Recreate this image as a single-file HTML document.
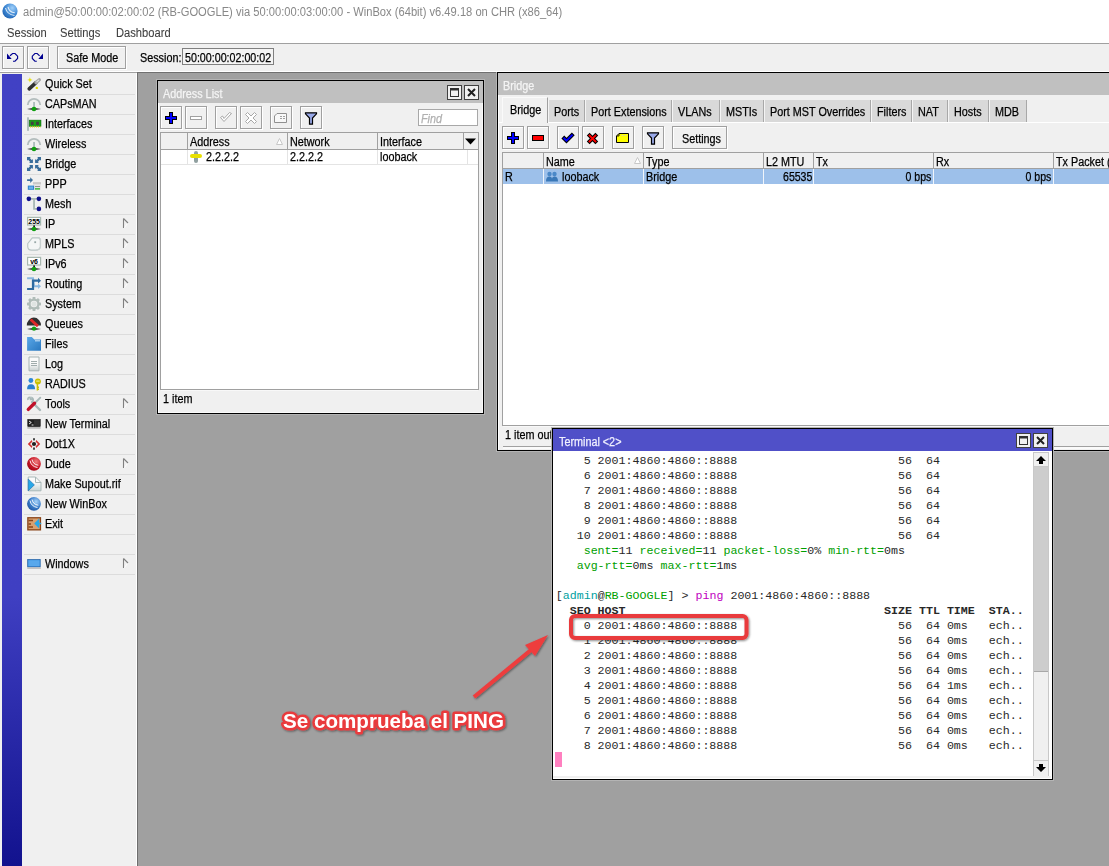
<!DOCTYPE html><html><head><meta charset="utf-8"><style>
*{margin:0;padding:0;box-sizing:border-box}
html,body{width:1109px;height:866px;overflow:hidden;background:#a0a0a0;font-family:"Liberation Sans",sans-serif;font-size:12px;color:#000}
body{position:relative}
.ab{position:absolute}
.t{position:absolute;white-space:pre;line-height:13px;margin-top:1px;font-size:12px;transform:scaleX(.9);transform-origin:0 0;-webkit-text-stroke:.25px currentColor}
.btn{position:absolute;background:#f0f0f0;border:1px solid #a0a0a0;box-shadow:inset 1px 1px 0 #fff,1px 1px 0 #fff}
.mono{font-family:"Liberation Mono",monospace;font-size:11.65px;color:#282828;white-space:pre;position:absolute;line-height:15px;left:555.7px}
svg{position:absolute;overflow:visible}
.g{color:#00a000}.c{color:#00a0a0}.m{color:#c000c0}
</style></head><body>
<div class="ab" style="left:0px;top:0px;width:1109px;height:43px;background:#fff"></div><svg style="left:2px;top:3px" width="16" height="16" viewBox="0 0 16 16"><defs><radialGradient id="gb" cx="0.65" cy="0.3" r="0.85"><stop offset="0" stop-color="#a0d0fa"/><stop offset="0.55" stop-color="#3c86d2"/><stop offset="1" stop-color="#1858a8"/></radialGradient></defs><circle cx="8" cy="8" r="7.6" fill="url(#gb)"/><path d="M3.5 5 Q5 11.5 12.5 12.5" stroke="#fff" stroke-width="1.1" fill="none" opacity=".8"/><path d="M6 3.8 Q7 9 12.8 9.8" stroke="#fff" stroke-width="1.1" fill="none" opacity=".8"/></svg><div class="t" style="left:23px;top:5px;transform:scaleX(0.93);color:#888;-webkit-text-stroke:0">admin@50:00:00:02:00:02 (RB-GOOGLE) via 50:00:00:03:00:00 - WinBox (64bit) v6.49.18 on CHR (x86_64)</div><div class="t" style="left:7px;top:26px;transform:scaleX(0.93);color:#404040;-webkit-text-stroke:.1px #404040">Session</div><div class="t" style="left:60px;top:26px;transform:scaleX(0.93);color:#404040;-webkit-text-stroke:.1px #404040">Settings</div><div class="t" style="left:116px;top:26px;transform:scaleX(0.93);color:#404040;-webkit-text-stroke:.1px #404040">Dashboard</div><div class="ab" style="left:0px;top:43px;width:1109px;height:1px;background:#a0a0a0"></div><div class="ab" style="left:0px;top:44px;width:1109px;height:28px;background:#f0f0f0"></div><div class="ab" style="left:0px;top:71px;width:1109px;height:1px;background:#fff"></div><div class="ab" style="left:0px;top:72px;width:1109px;height:1px;background:#a0a0a0"></div><div class="btn" style="left:2px;top:46px;width:22px;height:23px;"></div><div class="btn" style="left:27px;top:46px;width:22px;height:23px;"></div><svg style="left:0;top:44px" width="52" height="28" viewBox="0 0 52 28"><g fill="none" stroke="#000090" stroke-width="1.15"><path d="M10 11.8 L12.6 9.5 H15 L17.6 12.2 V14.4 L15 17.2 H13"/><path d="M39.6 11.8 L37.2 9.5 H34.9 L32.3 12.2 V14.4 L34.9 17.2 H36.8"/></g><path d="M7 9.6 V15 H11.7 Z M43 9.6 V15 H38.3 Z" fill="#000090"/></svg><div class="btn" style="left:57px;top:46px;width:69px;height:23px;"></div><div class="t" style="left:66px;top:51px;">Safe Mode</div><div class="t" style="left:140px;top:51px;">Session:</div><div class="ab" style="left:182px;top:48px;width:92px;height:17px;background:#f4f4f4;border:1px solid #808080"></div><div class="t" style="left:185px;top:51px;transform:scaleX(0.89);">50:00:00:02:00:02</div><div class="ab" style="left:0px;top:73px;width:137px;height:793px;background:#f0f0f0"></div><div class="ab" style="left:136px;top:73px;width:1px;height:793px;background:#fff"></div><div class="ab" style="left:137px;top:72px;width:1px;height:794px;background:#6e6e6e"></div><div class="ab" style="left:137px;top:72px;width:972px;height:1px;background:#707070"></div><div class="ab" style="left:2px;top:74px;width:20px;height:792px;background:linear-gradient(#4141c4 0%,#3f3fc2 66%,#12128e 100%)"></div><div class="ab" style="left:24px;top:94px;width:111px;height:1px;background:#dcdcdc"></div><div class="t" style="left:45px;top:77px;">Quick Set</div><div class="ab" style="left:24px;top:114px;width:111px;height:1px;background:#dcdcdc"></div><div class="t" style="left:45px;top:97px;">CAPsMAN</div><div class="ab" style="left:24px;top:134px;width:111px;height:1px;background:#dcdcdc"></div><div class="t" style="left:45px;top:117px;">Interfaces</div><div class="ab" style="left:24px;top:154px;width:111px;height:1px;background:#dcdcdc"></div><div class="t" style="left:45px;top:137px;">Wireless</div><div class="ab" style="left:24px;top:174px;width:111px;height:1px;background:#dcdcdc"></div><div class="t" style="left:45px;top:157px;">Bridge</div><div class="ab" style="left:24px;top:194px;width:111px;height:1px;background:#dcdcdc"></div><div class="t" style="left:45px;top:177px;">PPP</div><div class="ab" style="left:24px;top:214px;width:111px;height:1px;background:#dcdcdc"></div><div class="t" style="left:45px;top:197px;">Mesh</div><div class="ab" style="left:24px;top:234px;width:111px;height:1px;background:#dcdcdc"></div><div class="t" style="left:45px;top:217px;">IP</div><svg style="left:123px;top:218px" width="8" height="11" viewBox="0 0 8 11"><path d="M5 5 L1 10" stroke="#fff" stroke-width="1" fill="none"/><path d="M0.5 0.5 L0.5 10 M0.5 0.5 L5 5" stroke="#808080" stroke-width="1.1" fill="none"/></svg><div class="ab" style="left:24px;top:254px;width:111px;height:1px;background:#dcdcdc"></div><div class="t" style="left:45px;top:237px;">MPLS</div><svg style="left:123px;top:238px" width="8" height="11" viewBox="0 0 8 11"><path d="M5 5 L1 10" stroke="#fff" stroke-width="1" fill="none"/><path d="M0.5 0.5 L0.5 10 M0.5 0.5 L5 5" stroke="#808080" stroke-width="1.1" fill="none"/></svg><div class="ab" style="left:24px;top:274px;width:111px;height:1px;background:#dcdcdc"></div><div class="t" style="left:45px;top:257px;">IPv6</div><svg style="left:123px;top:258px" width="8" height="11" viewBox="0 0 8 11"><path d="M5 5 L1 10" stroke="#fff" stroke-width="1" fill="none"/><path d="M0.5 0.5 L0.5 10 M0.5 0.5 L5 5" stroke="#808080" stroke-width="1.1" fill="none"/></svg><div class="ab" style="left:24px;top:294px;width:111px;height:1px;background:#dcdcdc"></div><div class="t" style="left:45px;top:277px;">Routing</div><svg style="left:123px;top:278px" width="8" height="11" viewBox="0 0 8 11"><path d="M5 5 L1 10" stroke="#fff" stroke-width="1" fill="none"/><path d="M0.5 0.5 L0.5 10 M0.5 0.5 L5 5" stroke="#808080" stroke-width="1.1" fill="none"/></svg><div class="ab" style="left:24px;top:314px;width:111px;height:1px;background:#dcdcdc"></div><div class="t" style="left:45px;top:297px;">System</div><svg style="left:123px;top:298px" width="8" height="11" viewBox="0 0 8 11"><path d="M5 5 L1 10" stroke="#fff" stroke-width="1" fill="none"/><path d="M0.5 0.5 L0.5 10 M0.5 0.5 L5 5" stroke="#808080" stroke-width="1.1" fill="none"/></svg><div class="ab" style="left:24px;top:334px;width:111px;height:1px;background:#dcdcdc"></div><div class="t" style="left:45px;top:317px;">Queues</div><div class="ab" style="left:24px;top:354px;width:111px;height:1px;background:#dcdcdc"></div><div class="t" style="left:45px;top:337px;">Files</div><div class="ab" style="left:24px;top:374px;width:111px;height:1px;background:#dcdcdc"></div><div class="t" style="left:45px;top:357px;">Log</div><div class="ab" style="left:24px;top:394px;width:111px;height:1px;background:#dcdcdc"></div><div class="t" style="left:45px;top:377px;">RADIUS</div><div class="ab" style="left:24px;top:414px;width:111px;height:1px;background:#dcdcdc"></div><div class="t" style="left:45px;top:397px;">Tools</div><svg style="left:123px;top:398px" width="8" height="11" viewBox="0 0 8 11"><path d="M5 5 L1 10" stroke="#fff" stroke-width="1" fill="none"/><path d="M0.5 0.5 L0.5 10 M0.5 0.5 L5 5" stroke="#808080" stroke-width="1.1" fill="none"/></svg><div class="ab" style="left:24px;top:434px;width:111px;height:1px;background:#dcdcdc"></div><div class="t" style="left:45px;top:417px;">New Terminal</div><div class="ab" style="left:24px;top:454px;width:111px;height:1px;background:#dcdcdc"></div><div class="t" style="left:45px;top:437px;">Dot1X</div><div class="ab" style="left:24px;top:474px;width:111px;height:1px;background:#dcdcdc"></div><div class="t" style="left:45px;top:457px;">Dude</div><svg style="left:123px;top:458px" width="8" height="11" viewBox="0 0 8 11"><path d="M5 5 L1 10" stroke="#fff" stroke-width="1" fill="none"/><path d="M0.5 0.5 L0.5 10 M0.5 0.5 L5 5" stroke="#808080" stroke-width="1.1" fill="none"/></svg><div class="ab" style="left:24px;top:494px;width:111px;height:1px;background:#dcdcdc"></div><div class="t" style="left:45px;top:477px;">Make Supout.rif</div><div class="ab" style="left:24px;top:514px;width:111px;height:1px;background:#dcdcdc"></div><div class="t" style="left:45px;top:497px;">New WinBox</div><div class="ab" style="left:24px;top:534px;width:111px;height:1px;background:#dcdcdc"></div><div class="t" style="left:45px;top:517px;">Exit</div><div class="ab" style="left:24px;top:554px;width:111px;height:1px;background:#dcdcdc"></div><div class="ab" style="left:24px;top:574px;width:111px;height:1px;background:#dcdcdc"></div><div class="t" style="left:45px;top:557px;">Windows</div><svg style="left:123px;top:558px" width="8" height="11" viewBox="0 0 8 11"><path d="M5 5 L1 10" stroke="#fff" stroke-width="1" fill="none"/><path d="M0.5 0.5 L0.5 10 M0.5 0.5 L5 5" stroke="#808080" stroke-width="1.1" fill="none"/></svg><svg style="left:26px;top:76px" width="16" height="16" viewBox="0 0 16 16"><path d="M3.9 1.2 L4.6 3.2 L6.6 3.9 L4.6 4.6 L3.9 6.6 L3.2 4.6 L1.2 3.9 L3.2 3.2 Z" fill="#e6e000"/><circle cx="10.8" cy="11.9" r="1.2" fill="#e6e000"/><path d="M3.2 12.8 L10 6.6" stroke="#303030" stroke-width="3.6" stroke-linecap="round"/><path d="M10 6.6 L13.3 3.8" stroke="#a8a8a8" stroke-width="3.4" stroke-linecap="round"/><path d="M10.5 6.1 L13 3.9" stroke="#e0e0e0" stroke-width="1.2"/></svg><svg style="left:26px;top:96px" width="16" height="16" viewBox="0 0 16 16"><path d="M1.8 9 A6.2 6.2 0 0 1 14.2 9" stroke="#a8b4b4" stroke-width="1.8" fill="none" opacity=".85"/><rect x="7.2" y="6" width="1.7" height="7" fill="#a8b8b8"/><defs><radialGradient id="shd"><stop offset=".2" stop-color="#101010"/><stop offset="1" stop-color="#101010" stop-opacity="0"/></radialGradient></defs><ellipse cx="8" cy="13" rx="7.5" ry="1.6" fill="url(#shd)"/><circle cx="8" cy="13" r="2.3" fill="#10a010"/></svg><svg style="left:26px;top:116px" width="16" height="16" viewBox="0 0 16 16"><rect x="1.1" y="1.3" width="1.8" height="13.5" fill="#a8b8b8"/><rect x="3.2" y="4.1" width="11.8" height="6.2" fill="#18a018" stroke="#0a5a0a" stroke-width=".5"/><rect x="4.9" y="5.7" width="2.8" height="3.2" fill="#404040"/><rect x="10.1" y="5.7" width="2.8" height="3.2" fill="#404040"/><path d="M4 10.8 H14.5" stroke="#d8d800" stroke-width="1.2" stroke-dasharray="1 1"/></svg><svg style="left:26px;top:136px" width="16" height="16" viewBox="0 0 16 16"><path d="M1.8 9 A6.2 6.2 0 0 1 14.2 9" stroke="#a8b4b4" stroke-width="1.8" fill="none" opacity=".85"/><rect x="7.2" y="6" width="1.7" height="7" fill="#a8b8b8"/><defs><radialGradient id="shd"><stop offset=".2" stop-color="#101010"/><stop offset="1" stop-color="#101010" stop-opacity="0"/></radialGradient></defs><ellipse cx="8" cy="13" rx="7.5" ry="1.6" fill="url(#shd)"/><circle cx="8" cy="13" r="2.3" fill="#10a010"/></svg><svg style="left:26px;top:156px" width="16" height="16" viewBox="0 0 16 16"><g><path d="M1 1 H4.9 L1 4.8 Z M6.9 6.9 H3.1 L6.9 3.1 Z" fill="#3a6e9c"/><path d="M2.2 2.2 L5.8 5.8" stroke="#3a6e9c" stroke-width="2.4"/></g><g transform="translate(16 0) scale(-1 1)"><path d="M1 1 H4.9 L1 4.8 Z M6.9 6.9 H3.1 L6.9 3.1 Z" fill="#3a6e9c"/><path d="M2.2 2.2 L5.8 5.8" stroke="#3a6e9c" stroke-width="2.4"/></g><g transform="translate(0 16) scale(1 -1)"><path d="M1 1 H4.9 L1 4.8 Z M6.9 6.9 H3.1 L6.9 3.1 Z" fill="#3a6e9c"/><path d="M2.2 2.2 L5.8 5.8" stroke="#3a6e9c" stroke-width="2.4"/></g><g transform="translate(16 16) scale(-1 -1)"><path d="M1 1 H4.9 L1 4.8 Z M6.9 6.9 H3.1 L6.9 3.1 Z" fill="#3a6e9c"/><path d="M2.2 2.2 L5.8 5.8" stroke="#3a6e9c" stroke-width="2.4"/></g></svg><svg style="left:26px;top:176px" width="16" height="16" viewBox="0 0 16 16"><path d="M1.1 3.3 H4.2 V1.3 L7 4.1 L4.2 6.9 V4.9 H1.1 Z" fill="#3a6e9c"/><rect x="7" y="6.2" width="8" height="7.9" fill="#e4e4e4"/><rect x="7" y="6.2" width="8" height="2" fill="#c8c8c8"/><rect x="9" y="10" width="5" height="1" fill="#909090"/><rect x="9" y="12.3" width="5" height="1.2" fill="#10b010"/><rect x="1.8" y="9.6" width="6.3" height="4.2" fill="#2a80cc"/><rect x="2.8" y="10.5" width="4.3" height="2.4" fill="#6ab0ea"/></svg><svg style="left:26px;top:196px" width="16" height="16" viewBox="0 0 16 16"><path d="M2.85 2.85 H12.9 M8.05 2.85 V12.9 H12.9" stroke="#a8b8b4" stroke-width="1.8" fill="none"/><circle cx="2.85" cy="2.85" r="2.3" fill="#10108a"/><circle cx="12.9" cy="2.85" r="2.3" fill="#10108a"/><circle cx="12.9" cy="12.9" r="2.3" fill="#10108a"/></svg><svg style="left:26px;top:216px" width="16" height="16" viewBox="0 0 16 16"><rect x="1.6" y="1.4" width="13" height="7.6" fill="#fff" stroke="#a8b8b0" stroke-width="1.2"/><text x="8.1" y="7.9" font-family="Liberation Sans" font-weight="bold" font-size="7" text-anchor="middle" fill="#000">255</text><rect x="7.3" y="9.4" width="1.6" height="2" fill="#000"/><defs><radialGradient id="shd"><stop offset=".2" stop-color="#101010"/><stop offset="1" stop-color="#101010" stop-opacity="0"/></radialGradient></defs><ellipse cx="8" cy="13" rx="7.5" ry="1.6" fill="url(#shd)"/><circle cx="8" cy="13" r="2.3" fill="#10a010"/></svg><svg style="left:26px;top:236px" width="16" height="16" viewBox="0 0 16 16"><path d="M1.2 7.5 L6 1.3 H13.5 L15 3 V10.5 Q14.5 14.7 9.5 14.7 H5.5 Q1.2 14.7 1.2 10.5 Z" fill="#b8c4c4"/><path d="M2.3 7.8 L6.5 2.4 H12.5 Q13.8 2.6 13.8 4.5 V10.2 Q13.6 13.6 9.3 13.6 H5.5 Q2.3 13.6 2.3 10.3 Z" fill="#f4f6f6"/><path d="M13 2.4 L14.5 3.6 V10.5 Q14 14 10 14.2" stroke="#c8d0d0" stroke-width="1.2" fill="none"/><rect x="8.3" y="5.3" width="1.8" height="1.8" fill="#98a8a8"/></svg><svg style="left:26px;top:256px" width="16" height="16" viewBox="0 0 16 16"><rect x="1.6" y="1.4" width="13" height="7.6" fill="#fff" stroke="#a8b8b0" stroke-width="1.2"/><text x="8.1" y="7.9" font-family="Liberation Sans" font-weight="bold" font-size="7" text-anchor="middle" fill="#000">v6</text><rect x="7.3" y="9.4" width="1.6" height="2" fill="#000"/><defs><radialGradient id="shd"><stop offset=".2" stop-color="#101010"/><stop offset="1" stop-color="#101010" stop-opacity="0"/></radialGradient></defs><ellipse cx="8" cy="13" rx="7.5" ry="1.6" fill="url(#shd)"/><circle cx="8" cy="13" r="2.3" fill="#10a010"/></svg><svg style="left:26px;top:276px" width="16" height="16" viewBox="0 0 16 16"><path d="M1.1 2.3 H7 L8 10.2 H12.5" stroke="#8ab8e0" stroke-width="2" fill="none"/><path d="M12 7.5 L15 10.2 L12 13 Z" fill="#8ab8e0"/><path d="M1.1 13 H7 V4.7 H12.5" stroke="#2e6aa0" stroke-width="2.2" fill="none"/><path d="M12 1.8 L15 4.7 L12 7.6 Z" fill="#2e6aa0"/></svg><svg style="left:26px;top:296px" width="16" height="16" viewBox="0 0 16 16"><g fill="#b0bcb8"><circle cx="8" cy="8" r="5.6"/><rect x="6.6" y="1" width="2.8" height="14"/><rect x="1" y="6.6" width="14" height="2.8"/><rect x="6.6" y="1" width="2.8" height="14" transform="rotate(45 8 8)"/><rect x="6.6" y="1" width="2.8" height="14" transform="rotate(-45 8 8)"/></g><circle cx="8" cy="8" r="3.3" fill="#f0f0f0"/><circle cx="8" cy="8" r="2.5" fill="#dfe4e2"/></svg><svg style="left:26px;top:316px" width="16" height="16" viewBox="0 0 16 16"><path d="M0.8 9.4 A7.1 7.8 0 0 1 15 9.4 Z" fill="#303030"/><path d="M4.6 3.5 L11.9 10.1" stroke="#e02828" stroke-width="2.8"/><defs><radialGradient id="shd"><stop offset=".2" stop-color="#101010"/><stop offset="1" stop-color="#101010" stop-opacity="0"/></radialGradient></defs><ellipse cx="8" cy="13" rx="7.5" ry="1.6" fill="url(#shd)"/><circle cx="8" cy="12.6" r="2.2" fill="#10a010"/></svg><svg style="left:26px;top:336px" width="16" height="16" viewBox="0 0 16 16"><defs><linearGradient id="fg" x1="0" y1="0" x2="1" y2="1"><stop offset="0" stop-color="#5aa8e8"/><stop offset="1" stop-color="#2a78c0"/></linearGradient></defs><path d="M1.1 0.9 H5.8 L8.3 3.5 H15 V14.7 H1.1 Z" fill="url(#fg)"/><rect x="9" y="4.4" width="5" height=".9" fill="#e8f4ff"/></svg><svg style="left:26px;top:356px" width="16" height="16" viewBox="0 0 16 16"><defs><linearGradient id="lg" x1="0" y1="0" x2="0" y2="1"><stop offset=".5" stop-color="#fafafa"/><stop offset="1" stop-color="#c8d0d0"/></linearGradient></defs><path d="M3 1 H13 V14.8 H3 Z" fill="url(#lg)" stroke="#a8b4b4" stroke-width="1"/><path d="M5 5.5 H11 M5 7.5 H11 M5 9.5 H11" stroke="#a0acac" stroke-width="1"/></svg><svg style="left:26px;top:376px" width="16" height="16" viewBox="0 0 16 16"><circle cx="4.9" cy="4.5" r="2.4" fill="#2a88d8"/><path d="M1.1 13.2 Q1 8.3 5 8.3 Q9.1 8.3 9.1 13.2 Z" fill="#2a80d0"/><circle cx="11.9" cy="5.4" r="3" fill="#c8c000"/><rect x="10.2" y="4.6" width="3.4" height="1" fill="#f0f0a0"/><path d="M11.4 8 V14.5 M11.4 11.2 H13 M11.4 13.3 H13" stroke="#c8c000" stroke-width="1.5"/></svg><svg style="left:26px;top:396px" width="16" height="16" viewBox="0 0 16 16"><path d="M6 6 L14 14" stroke="#a8b8b8" stroke-width="2.4" stroke-linecap="round"/><path d="M2 4 Q1.5 1.5 4 1.3 L4.5 3.5 L6 3.5 L6 1.8 Q8.2 3 6.5 6" stroke="#a8b8b8" stroke-width="1.6" fill="none"/><path d="M8 8 L14.3 1.6" stroke="#a8b8b8" stroke-width="1.8" stroke-linecap="round"/><path d="M2.3 13.4 L8.5 7.2" stroke="#c0102a" stroke-width="3.4" stroke-linecap="round"/></svg><svg style="left:26px;top:416px" width="16" height="16" viewBox="0 0 16 16"><rect x="1.8" y="3.6" width="12.4" height="6.8" fill="#202020" stroke="#000" stroke-width=".6"/><rect x="8" y="4.2" width="5.8" height="5.6" fill="#404040" opacity=".6"/><path d="M3 5 L5.3 6.5 L3 8" stroke="#fff" stroke-width=".9" fill="none"/><path d="M5.6 9 H7.5" stroke="#fff" stroke-width=".9"/><rect x="1.3" y="11.2" width="13.4" height="1.4" fill="#b0b0b0"/></svg><svg style="left:26px;top:436px" width="16" height="16" viewBox="0 0 16 16"><path d="M5.8 4 L1.8 8 L5.8 12 L6.3 10.3 L4 8 L6.3 5.7 Z" fill="#d03030"/><path d="M10.2 4 L14.2 8 L10.2 12 L9.7 10.3 L12 8 L9.7 5.7 Z" fill="#d03030"/><circle cx="8" cy="8" r="2.1" fill="#202020"/><rect x="7.2" y="2.2" width="1.6" height="2.2" fill="#202020"/><rect x="7.2" y="11.5" width="1.6" height="2.2" fill="#202020"/></svg><svg style="left:26px;top:456px" width="16" height="16" viewBox="0 0 16 16"><defs><radialGradient id="of08080" cx=".65" cy=".35" r=".8"><stop offset="0" stop-color="#f08080"/><stop offset=".55" stop-color="#c81828"/><stop offset="1" stop-color="#900010"/></radialGradient></defs><circle cx="8" cy="7.8" r="6.9" fill="url(#of08080)"/><path d="M4 4.5 Q5 10.5 11.5 11.5" stroke="#fff" stroke-width="1" fill="none" opacity=".9"/><path d="M6 3.5 Q7 8.5 12.3 9.2" stroke="#fff" stroke-width="1" fill="none" opacity=".9"/></svg><svg style="left:26px;top:476px" width="16" height="16" viewBox="0 0 16 16"><defs><linearGradient id="sg" x1="0" y1="0" x2="0" y2="1"><stop offset=".4" stop-color="#fafafa"/><stop offset="1" stop-color="#c8d4d4"/></linearGradient></defs><path d="M2.2 1 H9.5 L15 6.5 V14.8 H2.2 Z" fill="url(#sg)" stroke="#a8b8b8" stroke-width="1"/><path d="M9.5 1 V6.5 H15" stroke="#a8b8b8" stroke-width="1" fill="none"/><path d="M2.2 3 L8.4 8.9 L2.2 14.8 Z" fill="#28a8e8" stroke="#1a68a8" stroke-width=".6"/></svg><svg style="left:26px;top:496px" width="16" height="16" viewBox="0 0 16 16"><defs><radialGradient id="oa8d4fa" cx=".65" cy=".35" r=".8"><stop offset="0" stop-color="#a8d4fa"/><stop offset=".55" stop-color="#3a7cc8"/><stop offset="1" stop-color="#1a4a98"/></radialGradient></defs><circle cx="8" cy="7.8" r="6.9" fill="url(#oa8d4fa)"/><path d="M4 4.5 Q5 10.5 11.5 11.5" stroke="#fff" stroke-width="1" fill="none" opacity=".9"/><path d="M6 3.5 Q7 8.5 12.3 9.2" stroke="#fff" stroke-width="1" fill="none" opacity=".9"/></svg><svg style="left:26px;top:516px" width="16" height="16" viewBox="0 0 16 16"><rect x="1.2" y="1.1" width="13.9" height="13.4" fill="#8a4418"/><rect x="2.5" y="2.4" width="11.3" height="10.8" fill="#d8a070"/><path d="M2.5 4.5 H7 M2.5 8 H5 M2.5 11 H7" stroke="#8a4418" stroke-width="1.3"/><path d="M8.2 7.5 L13.2 2.5 V12.6 Z" fill="#28a8e8"/><rect x="12" y="6.8" width="3.2" height="1.4" fill="#28a8e8"/></svg><svg style="left:26px;top:556px" width="16" height="16" viewBox="0 0 16 16"><rect x="1.7" y="3.6" width="12.5" height="7.3" fill="#3a90e0" stroke="#1a5aa0" stroke-width=".7"/><rect x="2.5" y="4.3" width="11" height="5.8" fill="#58a8ec"/><rect x="1.2" y="11.4" width="13.6" height="1.4" fill="#b8b8b8"/></svg><div class="ab" style="left:156px;top:79px;width:329px;height:336px;border:1px solid #b4b4b4"></div><div class="ab" style="left:157px;top:80px;width:327px;height:334px;background:#f0f0f0;border:1px solid #000;box-shadow:inset 1px 1px 0 #fff,inset -1px -1px 0 #fafafa"></div><div class="ab" style="left:158px;top:81px;width:325px;height:22px;background:#c0c0c0"></div><div class="t" style="left:163px;top:87px;color:#f4f4f4">Address List</div><div class="ab" style="left:447px;top:85px;width:15px;height:15px;background:#f0f0f0;border:1px solid #404040"></div><div class="ab" style="left:464px;top:85px;width:15px;height:15px;background:#f0f0f0;border:1px solid #404040"></div><svg style="left:450px;top:88px" width="9" height="9"><rect x="0.5" y="0.5" width="8" height="8" fill="none" stroke="#303030" stroke-width="1"/><rect x="0.5" y="0.5" width="8" height="2" fill="#303030"/></svg><svg style="left:467px;top:88px" width="9" height="9"><path d="M1 1 L8 8 M8 1 L1 8" stroke="#202020" stroke-width="2"/></svg><div class="btn" style="left:160px;top:106px;width:22px;height:23px;"></div><div class="btn" style="left:185px;top:106px;width:22px;height:23px;"></div><div class="btn" style="left:215px;top:106px;width:22px;height:23px;"></div><div class="btn" style="left:240px;top:106px;width:22px;height:23px;"></div><div class="btn" style="left:270px;top:106px;width:22px;height:23px;"></div><div class="btn" style="left:300px;top:106px;width:22px;height:23px;"></div><svg style="left:165px;top:112px" width="12" height="12" viewBox="0 0 12 12" shape-rendering="crispEdges"><path d="M4 0 H8 V4 H12 V8 H8 V12 H4 V8 H0 V4 H4 Z" fill="#000"/><path d="M5 1 H7 V5 H11 V7 H7 V11 H5 V7 H1 V5 H5 Z" fill="#0000ff"/></svg><svg style="left:190px;top:116px" width="12" height="4"><rect x="0.5" y="0.5" width="11" height="3" fill="#fff" stroke="#a0a0a0"/></svg><svg style="left:220px;top:112px" width="12" height="11" viewBox="0 0 12 11"><path d="M0.5 5.5 L4 9.5 L11.5 1.5 L9.5 0.5 L4 6.5 L2.5 4 Z" fill="#fff" stroke="#a8a8a8"/></svg><svg style="left:245px;top:112px" width="12" height="12" viewBox="0 0 12 12"><path d="M0.5 2.5 L2.5 0.5 L6 4 L9.5 0.5 L11.5 2.5 L8 6 L11.5 9.5 L9.5 11.5 L6 8 L2.5 11.5 L0.5 9.5 L4 6 Z" fill="#fff" stroke="#a8a8a8"/></svg><svg style="left:274px;top:113px" width="13" height="10" viewBox="0 0 13 10"><path d="M0.5 3 L3 0.5 H12.5 V9.5 H0.5 Z" fill="#f8f8f8" stroke="#909090"/><path d="M6 3.5 H8 M9 3.5 H11 M6 5.5 H8 M9 5.5 H11" stroke="#a0a0a0"/></svg><svg style="left:305px;top:112px" width="12" height="13" viewBox="0 0 12 13"><path d="M0.5 0.8 H11.5 V1.8 L7.5 6 V12.2 H4.5 V6 L0.5 1.8 Z" fill="#98a8e8" stroke="#000" stroke-width="1.2"/></svg><div class="ab" style="left:418px;top:109px;width:60px;height:17px;background:#fff;border:1px solid #a8a8a8"></div><div class="t" style="left:421px;top:112px;color:#b0b0b0;font-style:italic">Find</div><div class="ab" style="left:160px;top:132px;width:319px;height:258px;background:#fff;border:1px solid #a0a0a0"></div><div class="ab" style="left:161px;top:133px;width:317px;height:17px;background:#f0f0f0;border-bottom:1px solid #a0a0a0"></div><div class="ab" style="left:187px;top:133px;width:1px;height:17px;background:#a0a0a0"></div><div class="ab" style="left:287px;top:133px;width:1px;height:17px;background:#a0a0a0"></div><div class="ab" style="left:377px;top:133px;width:1px;height:17px;background:#a0a0a0"></div><div class="ab" style="left:463px;top:133px;width:1px;height:17px;background:#a0a0a0"></div><div class="ab" style="left:187px;top:150px;width:1px;height:14px;background:#e4e4e4"></div><div class="ab" style="left:287px;top:150px;width:1px;height:14px;background:#e4e4e4"></div><div class="ab" style="left:377px;top:150px;width:1px;height:14px;background:#e4e4e4"></div><div class="ab" style="left:467px;top:150px;width:1px;height:14px;background:#e4e4e4"></div><div class="ab" style="left:161px;top:164px;width:317px;height:1px;background:#e4e4e4"></div><div class="t" style="left:190px;top:135px;">Address</div><div class="t" style="left:290px;top:135px;">Network</div><div class="t" style="left:380px;top:135px;">Interface</div><svg style="left:276px;top:138px" width="7" height="7"><path d="M3.5 0.5 L6.5 6.5 H0.5 Z" fill="#fff" stroke="#c8c8c8"/></svg><svg style="left:465px;top:138px" width="12" height="8"><path d="M0 0.5 H11 L5.5 6.5 Z" fill="#000"/></svg><svg style="left:190px;top:151px" width="12" height="12"><rect x="4" y="0" width="4" height="12" rx="2" fill="#90a0a0"/><rect x="0" y="3" width="12" height="4" rx="2" fill="#e8e000"/></svg><div class="t" style="left:206px;top:150px;">2.2.2.2</div><div class="t" style="left:290px;top:150px;">2.2.2.2</div><div class="t" style="left:380px;top:150px;">looback</div><div class="ab" style="left:161px;top:390px;width:317px;height:1px;background:#f8f8f8"></div><div class="t" style="left:163px;top:392px;">1 item</div><div class="ab" style="left:496px;top:71px;width:620px;height:381px;border:1px solid #b4b4b4"></div><div class="ab" style="left:496px;top:71px;width:613px;height:1px;background:#fff"></div><div class="ab" style="left:497px;top:72px;width:620px;height:379px;background:#f0f0f0;border:1px solid #000;box-shadow:inset 1px 1px 0 #fff"></div><div class="ab" style="left:498px;top:73px;width:620px;height:22px;background:#c0c0c0"></div><div class="t" style="left:503px;top:79px;color:#f4f4f4">Bridge</div><div class="ab" style="left:498px;top:122px;width:620px;height:1px;background:#fff"></div><div class="ab" style="left:502px;top:97px;width:46px;height:26px;background:#f0f0f0;border-top:1px solid #fafafa;border-left:1px solid #fafafa;border-right:1px solid #a0a0a0"></div><div class="t" style="left:510px;top:103px;">Bridge</div><div class="ab" style="left:548px;top:100px;width:37px;height:22px;background:#d9d9d9;border-right:1px solid #a8a8a8;box-shadow:inset 1px 0 0 #f4f4f4"></div><div class="t" style="left:554px;top:105px;">Ports</div><div class="ab" style="left:585px;top:100px;width:87px;height:22px;background:#d9d9d9;border-right:1px solid #a8a8a8;box-shadow:inset 1px 0 0 #f4f4f4"></div><div class="t" style="left:591px;top:105px;">Port Extensions</div><div class="ab" style="left:672px;top:100px;width:48px;height:22px;background:#d9d9d9;border-right:1px solid #a8a8a8;box-shadow:inset 1px 0 0 #f4f4f4"></div><div class="t" style="left:678px;top:105px;">VLANs</div><div class="ab" style="left:720px;top:100px;width:44px;height:22px;background:#d9d9d9;border-right:1px solid #a8a8a8;box-shadow:inset 1px 0 0 #f4f4f4"></div><div class="t" style="left:726px;top:105px;">MSTIs</div><div class="ab" style="left:764px;top:100px;width:107px;height:22px;background:#d9d9d9;border-right:1px solid #a8a8a8;box-shadow:inset 1px 0 0 #f4f4f4"></div><div class="t" style="left:770px;top:105px;">Port MST Overrides</div><div class="ab" style="left:871px;top:100px;width:41px;height:22px;background:#d9d9d9;border-right:1px solid #a8a8a8;box-shadow:inset 1px 0 0 #f4f4f4"></div><div class="t" style="left:877px;top:105px;">Filters</div><div class="ab" style="left:912px;top:100px;width:36px;height:22px;background:#d9d9d9;border-right:1px solid #a8a8a8;box-shadow:inset 1px 0 0 #f4f4f4"></div><div class="t" style="left:918px;top:105px;">NAT</div><div class="ab" style="left:948px;top:100px;width:41px;height:22px;background:#d9d9d9;border-right:1px solid #a8a8a8;box-shadow:inset 1px 0 0 #f4f4f4"></div><div class="t" style="left:954px;top:105px;">Hosts</div><div class="ab" style="left:989px;top:100px;width:38px;height:22px;background:#d9d9d9;border-right:1px solid #a8a8a8;box-shadow:inset 1px 0 0 #f4f4f4"></div><div class="t" style="left:995px;top:105px;">MDB</div><div class="btn" style="left:502px;top:126px;width:22px;height:23px;"></div><div class="btn" style="left:527px;top:126px;width:22px;height:23px;"></div><div class="btn" style="left:557px;top:126px;width:22px;height:23px;"></div><div class="btn" style="left:582px;top:126px;width:22px;height:23px;"></div><div class="btn" style="left:612px;top:126px;width:22px;height:23px;"></div><div class="btn" style="left:642px;top:126px;width:22px;height:23px;"></div><div class="btn" style="left:672px;top:126px;width:55px;height:23px;"></div><div class="t" style="left:682px;top:132px;">Settings</div><svg style="left:507px;top:132px" width="12" height="12" viewBox="0 0 12 12" shape-rendering="crispEdges"><path d="M4 0 H8 V4 H12 V8 H8 V12 H4 V8 H0 V4 H4 Z" fill="#000"/><path d="M5 1 H7 V5 H11 V7 H7 V11 H5 V7 H1 V5 H5 Z" fill="#0000ff"/></svg><svg style="left:532px;top:135px" width="12" height="6"><rect x="0.5" y="0.5" width="11" height="5" fill="#ff0000" stroke="#000" stroke-width="1"/></svg><svg style="left:560px;top:130px" width="16" height="15" viewBox="0 0 16 15"><path d="M2.8 7 L6.5 10.7 L13.3 3.9" stroke="#000" stroke-width="4" fill="none" stroke-linejoin="miter"/><path d="M3.5 7.7 L6.5 10.7 L12.6 4.6" stroke="#0000ff" stroke-width="2" fill="none" stroke-linejoin="miter"/></svg><svg style="left:586px;top:132px" width="13" height="13" viewBox="0 0 13 13"><path d="M2.2 2.2 L10.8 10.8 M10.8 2.2 L2.2 10.8" stroke="#000" stroke-width="4"/><path d="M2.9 2.9 L10.1 10.1 M10.1 2.9 L2.9 10.1" stroke="#ff0000" stroke-width="2"/></svg><svg style="left:616px;top:133px" width="13" height="10" viewBox="0 0 13 10"><path d="M0.5 3 L3 0.5 H12.5 V9.5 H0.5 Z" fill="#ffff00" stroke="#000" stroke-width="1"/><path d="M0.8 3 H3 V0.8" stroke="#000" stroke-width=".8" fill="none"/><path d="M5.5 2.5 H7.5 M8.5 2.5 H10.5" stroke="#d8d8a0" stroke-width="1"/></svg><svg style="left:647px;top:132px" width="12" height="13" viewBox="0 0 12 13"><path d="M0.5 0.8 H11.5 V1.8 L7.5 6 V12.2 H4.5 V6 L0.5 1.8 Z" fill="#98a8e8" stroke="#000" stroke-width="1.2"/></svg><div class="ab" style="left:502px;top:152px;width:620px;height:274px;background:#fff;border:1px solid #a0a0a0"></div><div class="ab" style="left:503px;top:153px;width:620px;height:16px;background:#f0f0f0;border-bottom:1px solid #a0a0a0"></div><div class="ab" style="left:543px;top:153px;width:1px;height:16px;background:#a0a0a0"></div><div class="ab" style="left:643px;top:153px;width:1px;height:16px;background:#a0a0a0"></div><div class="ab" style="left:763px;top:153px;width:1px;height:16px;background:#a0a0a0"></div><div class="ab" style="left:813px;top:153px;width:1px;height:16px;background:#a0a0a0"></div><div class="ab" style="left:933px;top:153px;width:1px;height:16px;background:#a0a0a0"></div><div class="ab" style="left:1053px;top:153px;width:1px;height:16px;background:#a0a0a0"></div><div class="ab" style="left:503px;top:169px;width:620px;height:15px;background:#9dc0ea"></div><div class="ab" style="left:543px;top:169px;width:1px;height:15px;background:#f0f4fa"></div><div class="ab" style="left:643px;top:169px;width:1px;height:15px;background:#f0f4fa"></div><div class="ab" style="left:763px;top:169px;width:1px;height:15px;background:#f0f4fa"></div><div class="ab" style="left:813px;top:169px;width:1px;height:15px;background:#f0f4fa"></div><div class="ab" style="left:933px;top:169px;width:1px;height:15px;background:#f0f4fa"></div><div class="ab" style="left:1053px;top:169px;width:1px;height:15px;background:#f0f4fa"></div><div class="t" style="left:546px;top:155px;">Name</div><div class="t" style="left:646px;top:155px;">Type</div><div class="t" style="left:766px;top:155px;">L2 MTU</div><div class="t" style="left:816px;top:155px;">Tx</div><div class="t" style="left:936px;top:155px;">Rx</div><div class="t" style="left:1056px;top:155px;">Tx Packet (p/s)</div><svg style="left:634px;top:157px" width="7" height="7"><path d="M3.5 0.5 L6.5 6.5 H0.5 Z" fill="#fff" stroke="#c8c8c8"/></svg><div class="t" style="left:505px;top:170px;">R</div><svg style="left:546px;top:171px" width="12" height="11" viewBox="0 0 12 11"><circle cx="3.5" cy="3" r="2.2" fill="#4a88c8"/><circle cx="8.5" cy="3" r="2.2" fill="#4a88c8"/><path d="M0 10.5 Q0 5.5 3.5 5.5 Q6 5.5 6 8 Q6 5.5 8.5 5.5 Q12 5.5 12 10.5 Z" fill="#3a78b8"/></svg><div class="t" style="left:562px;top:170px;">looback</div><div class="t" style="left:646px;top:170px;">Bridge</div><div class="t" style="right:297px;top:170px;transform:scaleX(0.88);transform-origin:100% 0;">65535</div><div class="t" style="right:178px;top:170px;transform:scaleX(0.88);transform-origin:100% 0;">0 bps</div><div class="t" style="right:58px;top:170px;transform:scaleX(0.88);transform-origin:100% 0;">0 bps</div><div class="ab" style="left:503px;top:426px;width:620px;height:1px;background:#f8f8f8"></div><div class="t" style="left:505px;top:428px;">1 item out of 1</div><div class="ab" style="left:503px;top:446px;width:620px;height:1px;background:#a0a0a0"></div><div class="ab" style="left:503px;top:447px;width:620px;height:2px;background:#fafafa"></div><div class="ab" style="left:551px;top:427px;width:503px;height:354px;border:1px solid #b4b4b4"></div><div class="ab" style="left:552px;top:428px;width:501px;height:352px;background:#fff;border:1px solid #000"></div><div class="ab" style="left:553px;top:429px;width:499px;height:22px;background:#5050c8"></div><div class="t" style="left:559px;top:435px;color:#f0f0ff">Terminal &lt;2&gt;</div><div class="ab" style="left:1016px;top:433px;width:15px;height:15px;background:#f0f0f0;border:1px solid #404040"></div><div class="ab" style="left:1033px;top:433px;width:15px;height:15px;background:#f0f0f0;border:1px solid #404040"></div><svg style="left:1019px;top:436px" width="9" height="9"><rect x="0.5" y="0.5" width="8" height="8" fill="none" stroke="#303030" stroke-width="1"/><rect x="0.5" y="0.5" width="8" height="2" fill="#303030"/></svg><svg style="left:1036px;top:436px" width="9" height="9"><path d="M1 1 L8 8 M8 1 L1 8" stroke="#202020" stroke-width="2"/></svg><div class="ab" style="left:1033px;top:452px;width:16px;height:325px;background:#f0f0f0;border:1px solid #c8c8c8"></div><div class="ab" style="left:1034px;top:453px;width:14px;height:14px;background:#f0f0f0;box-shadow:inset 0 -1px 0 #c8c8c8"></div><div class="ab" style="left:1034px;top:467px;width:14px;height:205px;background:#cdcdcd;box-shadow:inset 0 -1px 0 #a8a8a8"></div><div class="ab" style="left:1034px;top:760px;width:14px;height:16px;background:#f0f0f0;box-shadow:inset 0 1px 0 #c8c8c8"></div><svg style="left:1036px;top:456px" width="10" height="8"><path d="M5 0 L10 5 H7 V8 H3 V5 H0 Z" fill="#000"/></svg><svg style="left:1036px;top:764px" width="10" height="8"><path d="M5 8 L10 3 H7 V0 H3 V3 H0 Z" fill="#000"/></svg><div class="ab" style="left:553px;top:776px;width:498px;height:2px;background:#f0f0f0"></div><div class="mono" style="top:453px">    5 2001:4860:4860::8888                       56  64</div><div class="mono" style="top:468px">    6 2001:4860:4860::8888                       56  64</div><div class="mono" style="top:483px">    7 2001:4860:4860::8888                       56  64</div><div class="mono" style="top:498px">    8 2001:4860:4860::8888                       56  64</div><div class="mono" style="top:513px">    9 2001:4860:4860::8888                       56  64</div><div class="mono" style="top:528px">   10 2001:4860:4860::8888                       56  64</div><div class="mono" style="top:543px">    <span class="g">sent=</span>11 <span class="g">received=</span>11 <span class="g">packet-loss=</span>0% <span class="g">min-rtt=</span>0ms</div><div class="mono" style="top:558px">   <span class="g">avg-rtt=</span>0ms <span class="g">max-rtt=</span>1ms</div><div class="mono" style="top:573px"></div><div class="mono" style="top:588px">[<span class="c">admin</span>@<span class="g">RB-GOOGLE</span>] &gt; <span class="m">ping</span> 2001:4860:4860::8888</div><div class="mono" style="top:603px"><b>  SEQ HOST                                     SIZE TTL TIME  STA..</b></div><div class="mono" style="top:618px">    0 2001:4860:4860::8888                       56  64 0ms   ech..</div><div class="mono" style="top:633px">    1 2001:4860:4860::8888                       56  64 0ms   ech..</div><div class="mono" style="top:648px">    2 2001:4860:4860::8888                       56  64 0ms   ech..</div><div class="mono" style="top:663px">    3 2001:4860:4860::8888                       56  64 0ms   ech..</div><div class="mono" style="top:678px">    4 2001:4860:4860::8888                       56  64 1ms   ech..</div><div class="mono" style="top:693px">    5 2001:4860:4860::8888                       56  64 0ms   ech..</div><div class="mono" style="top:708px">    6 2001:4860:4860::8888                       56  64 0ms   ech..</div><div class="mono" style="top:723px">    7 2001:4860:4860::8888                       56  64 0ms   ech..</div><div class="mono" style="top:738px">    8 2001:4860:4860::8888                       56  64 0ms   ech..</div><div class="ab" style="left:555px;top:752px;width:7px;height:15px;background:#ff80c0"></div><svg style="left:0;top:0" width="1109" height="866"><defs><filter id="sh" x="-20%" y="-20%" width="140%" height="140%"><feDropShadow dx="1" dy="1" stdDeviation="0.8" flood-color="#000" flood-opacity="0.45"/></filter></defs><rect x="571" y="616" width="175.5" height="22" rx="4" fill="none" stroke="#e93a3c" stroke-width="4" filter="url(#sh)"/><g filter="url(#sh)"><path d="M474 697 L537 645" stroke="#ee3c3e" stroke-width="4" fill="none"/><path d="M548 635 L525 645 L535 656 Z" fill="#ee3c3e"/></g><text x="283" y="728" font-family="Liberation Sans" font-weight="bold" font-size="20" fill="#fff" stroke="#e93a3c" stroke-width="5" stroke-linejoin="round" paint-order="stroke" filter="url(#sh)" textLength="221" lengthAdjust="spacingAndGlyphs">Se comprueba el PING</text></svg>
</body></html>
